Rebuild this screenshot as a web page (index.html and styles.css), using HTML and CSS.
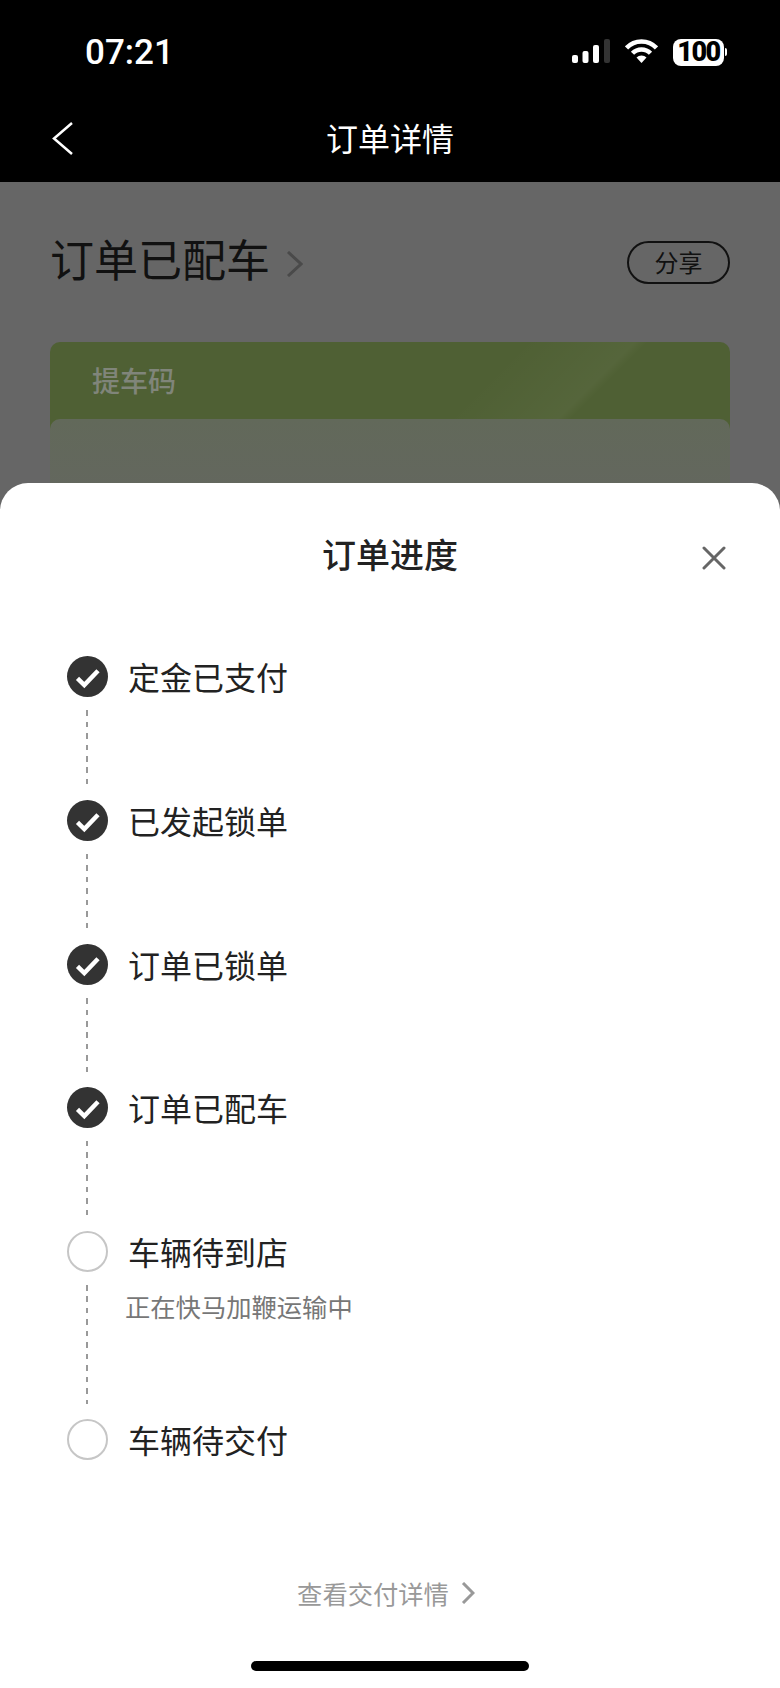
FILE: index.html
```html
<!DOCTYPE html>
<html lang="zh-CN">
<head>
    <meta charset="UTF-8">
    <title>订单详情</title>
    <link rel="stylesheet" href="styles.css">
</head>
<body>

<div class="page">
    <header class="top">
        <div class="status">
            <span class="time">07:21</span>
            <div class="status-icons">
                <svg class="signal" width="38" height="24" viewBox="0 0 38 24">
                    <rect x="0" y="16" width="6" height="8" rx="2" fill="#fff"/>
                    <rect x="10.5" y="12" width="6" height="12" rx="2" fill="#fff"/>
                    <rect x="21" y="6" width="6" height="18" rx="2" fill="#fff"/>
                    <rect x="32" y="0" width="6" height="24" rx="2" fill="#333"/>
                </svg>
                <svg class="wifi" width="33" height="24" viewBox="0 0 33 24">
                    <path d="M1.5 9A20.5 20.5 0 0 1 31.5 9" fill="none" stroke="#fff" stroke-width="4.5"/>
                    <path d="M7.5 14.3A12.5 12.5 0 0 1 25.5 14.3" fill="none" stroke="#fff" stroke-width="4.5"/>
                    <path d="M16.5 24L11.5 18.5A7 7 0 0 1 21.5 18.5Z" fill="#fff"/>
                </svg>
                <div class="battery">
                    <span class="battery-level">100</span>
                    <span class="battery-nub"></span>
                </div>
            </div>
        </div>
        <nav class="nav">
            <svg class="back" width="21" height="33" viewBox="0 0 21 33">
                <path d="M20 1L2 16.5L20 32" fill="none" stroke="#fff" stroke-width="2.5"/>
            </svg>
            <div class="nav-title">订单详情</div>
            <div></div>
        </nav>
    </header>

    <main class="order">
        <div class="order-head">
            <div class="order-status">
                <h1>订单已配车</h1>
                <svg class="order-arrow" width="17" height="26" viewBox="0 0 17 26">
                    <path d="M2 1L15 13L2 25" fill="none" stroke="#4a4a4a" stroke-width="3"/>
                </svg>
            </div>
            <div class="share">分享</div>
        </div>
        <section class="pickup">
            <div class="pickup-title">提车码</div>
            <div class="pickup-inner"></div>
        </section>
    </main>

    <div class="sheet">
        <div class="sheet-head">
            <h2>订单进度</h2>
            <svg class="close" width="24" height="24" viewBox="0 0 24 24">
                <path d="M2 2L22 22M22 2L2 22" fill="none" stroke="#666" stroke-width="3" stroke-linecap="round"/>
            </svg>
        </div>

        <ul class="steps">
            <li class="step">
                <div class="rail">
                    <svg class="dot" width="41" height="41" viewBox="0 0 41 41">
                        <circle cx="20.5" cy="20.5" r="20.5" fill="#333"/>
                        <path d="M10.5 22.3L17.3 29L31 14.8" fill="none" stroke="#fff" stroke-width="4.5"/>
                    </svg>
                    <span class="dash"></span>
                </div>
                <div class="step-text">定金已支付</div>
            </li>
            <li class="step">
                <div class="rail">
                    <svg class="dot" width="41" height="41" viewBox="0 0 41 41">
                        <circle cx="20.5" cy="20.5" r="20.5" fill="#333"/>
                        <path d="M10.5 22.3L17.3 29L31 14.8" fill="none" stroke="#fff" stroke-width="4.5"/>
                    </svg>
                    <span class="dash"></span>
                </div>
                <div class="step-text">已发起锁单</div>
            </li>
            <li class="step">
                <div class="rail">
                    <svg class="dot" width="41" height="41" viewBox="0 0 41 41">
                        <circle cx="20.5" cy="20.5" r="20.5" fill="#333"/>
                        <path d="M10.5 22.3L17.3 29L31 14.8" fill="none" stroke="#fff" stroke-width="4.5"/>
                    </svg>
                    <span class="dash"></span>
                </div>
                <div class="step-text">订单已锁单</div>
            </li>
            <li class="step">
                <div class="rail">
                    <svg class="dot" width="41" height="41" viewBox="0 0 41 41">
                        <circle cx="20.5" cy="20.5" r="20.5" fill="#333"/>
                        <path d="M10.5 22.3L17.3 29L31 14.8" fill="none" stroke="#fff" stroke-width="4.5"/>
                    </svg>
                    <span class="dash"></span>
                </div>
                <div class="step-text">订单已配车</div>
            </li>
            <li class="step step-tall">
                <div class="rail">
                    <span class="ring"></span>
                    <span class="dash"></span>
                </div>
                <div>
                    <div class="step-text">车辆待到店</div>
                    <div class="step-note">正在快马加鞭运输中</div>
                </div>
            </li>
            <li class="step step-last">
                <div class="rail">
                    <span class="ring"></span>
                </div>
                <div class="step-text">车辆待交付</div>
            </li>
        </ul>

        <div class="sheet-link">
            <span>查看交付详情</span>
            <svg width="14" height="22" viewBox="0 0 14 22">
                <path d="M2 1L12 11L2 21" fill="none" stroke="#999" stroke-width="3"/>
            </svg>
        </div>
        <div class="home-bar"></div>
    </div>
</div>

</body>
</html>
```

FILE: styles.css
```css
* {
    box-sizing: border-box;
}

body {
    margin: 0;
    font-family: "Noto Sans CJK SC", "Noto Sans", sans-serif;
    background: #666;
}

.page {
    position: relative;
    width: 780px;
    height: 1688px;
    overflow: hidden;
    background: #666;
}

.top {
    height: 182px;
    background: #000;
    color: #fff;
}

.status {
    height: 104px;
    padding: 0 53px 0 85px;
    display: flex;
    align-items: center;
    justify-content: space-between;
}

.time {
    font-family: Roboto, sans-serif;
    font-size: 35px;
    font-weight: 500;
}

.status-icons {
    display: flex;
    align-items: flex-start;
    height: 27px;
    gap: 15px;
}

.battery {
    display: flex;
    align-items: center;
    gap: 1px;
}

.battery-level {
    width: 51px;
    height: 27px;
    line-height: 27px;
    text-align: center;
    border-radius: 8px;
    background: #fff;
    color: #000;
    font-family: Roboto, sans-serif;
    font-size: 27px;
    font-weight: 900;
    letter-spacing: -1.5px;
}

.battery-nub {
    width: 2px;
    height: 8px;
    border-radius: 0 2px 2px 0;
    background: #fff;
}

.nav {
    height: 70px;
    padding: 0 52px 2px;
    display: grid;
    grid-template-columns: 1fr auto 1fr;
    align-items: center;
}

.nav-title {
    padding-bottom: 2px;
    font-size: 32px;
    line-height: 44px;
}

.order {
    padding: 59px 50px 0;
}

.order-head {
    display: flex;
    align-items: center;
    justify-content: space-between;
    height: 42px;
}

.order-status {
    display: flex;
    align-items: center;
    gap: 16px;
}

.order-status h1 {
    margin: 0 0 8px;
    font-size: 44px;
    font-weight: 400;
    line-height: 60px;
    color: #111;
}

.order-arrow {
    margin-top: 3px;
}

.share {
    width: 103px;
    height: 43px;
    line-height: 38px;
    text-align: center;
    border: 2px solid #111;
    border-radius: 22px;
    font-size: 24px;
    color: #111;
}

.pickup {
    height: 180px;
    margin-top: 59px;
    border-radius: 10px;
    background:
        linear-gradient(135deg, transparent 55%, rgba(255, 255, 255, 0.035) 68%, transparent 69.5%),
        #4f6034;
}

.pickup-title {
    height: 77px;
    padding-left: 42px;
    font-size: 28px;
    font-weight: 500;
    line-height: 76px;
    color: #80857a;
}

.pickup-inner {
    height: 103px;
    border-radius: 10px 10px 0 0;
    background: linear-gradient(180deg, #62695a 0%, #646660 100%);
}

.sheet {
    position: absolute;
    left: 0;
    right: 0;
    top: 483px;
    bottom: 0;
    display: flex;
    flex-direction: column;
    border-radius: 28px 28px 0 0;
    background: #fff;
}

.sheet-head {
    position: relative;
    height: 173px;
    padding-top: 45px;
    text-align: center;
}

.sheet-head h2 {
    margin: 0;
    font-size: 34px;
    font-weight: 500;
    line-height: 52px;
    color: #222;
}

.close {
    position: absolute;
    top: 63px;
    right: 54px;
}

.steps {
    list-style: none;
    margin: 0;
    padding: 0 0 0 67px;
}

.step {
    display: flex;
    gap: 20px;
    height: 143.75px;
}

.step-tall {
    height: 188px;
}

.step-last {
    height: 114px;
}

.rail {
    width: 41px;
    display: flex;
    flex-direction: column;
    align-items: flex-start;
}

.dot {
    flex: none;
}

.ring {
    flex: none;
    width: 41px;
    height: 41px;
    border: 2.5px solid #c6c6c6;
    border-radius: 50%;
}

.dash {
    flex: 1;
    width: 2px;
    margin: 13px 0 15px 19px;
    background: repeating-linear-gradient(180deg, #999 0, #999 5.5px, transparent 5.5px, transparent 11.5px);
}

.step-text {
    font-size: 32px;
    line-height: 40px;
    color: #222;
}

.step-note {
    margin: 18px 0 0 -3px;
    font-size: 25.3px;
    line-height: 34px;
    color: #777;
}

.sheet-link {
    display: flex;
    align-items: center;
    justify-content: center;
    gap: 12px;
    margin-top: 42px;
    padding-right: 8px;
    font-size: 25.3px;
    line-height: 36px;
    color: #999;
}

.home-bar {
    width: 278px;
    height: 10px;
    margin: 50px auto 0;
    border-radius: 5px;
    background: #000;
}
```
